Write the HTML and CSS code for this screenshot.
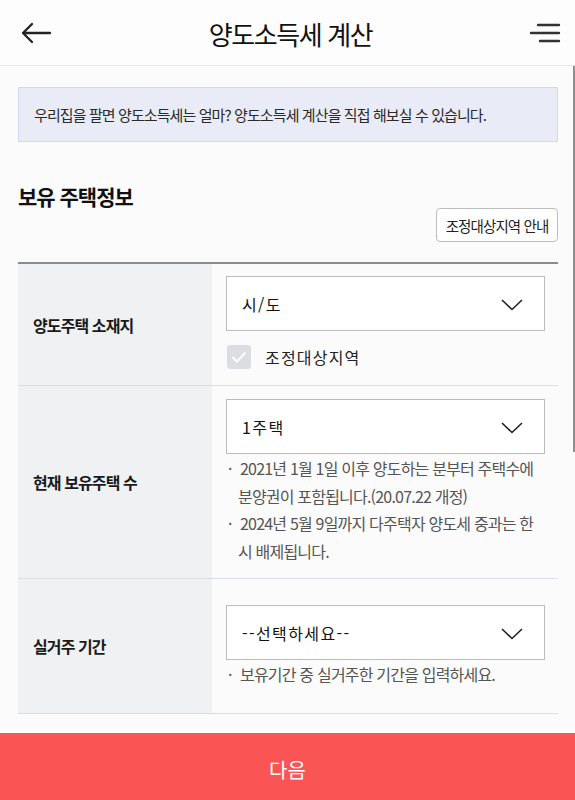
FILE: index.html
```html
<!DOCTYPE html>
<html lang="ko">
<head>
<meta charset="utf-8">
<title>양도소득세 계산</title>
<link rel="stylesheet" href="styles.css">
</head>
<body>
<header class="topbar">
  <button class="icon-btn" aria-label="뒤로">
    <svg width="32" height="24" viewBox="0 0 32 24"><path d="M30 12 H3 M12 3 L3 12 L12 21" fill="none" stroke="#222" stroke-width="2.3" stroke-linecap="round" stroke-linejoin="round"/></svg>
  </button>
  <h1 class="topbar-title">양도소득세 계산</h1>
  <button class="icon-btn" aria-label="메뉴">
    <svg width="32" height="22" viewBox="0 0 32 22"><path d="M9 3 H30 M2 11 H30 M11 19 H30" fill="none" stroke="#333" stroke-width="2.4" stroke-linecap="round"/></svg>
  </button>
</header>

<main class="content">
  <div class="intro">우리집을 팔면 양도소득세는 얼마? 양도소득세 계산을 직접 해보실 수 있습니다.</div>

  <h2 class="section-title">보유 주택정보</h2>
  <div class="section-actions">
    <button class="outline-btn">조정대상지역 안내</button>
  </div>

  <div class="form-table">
    <div class="row">
      <div class="label">양도주택 소재지</div>
      <div class="field field--first">
        <div class="select"><span>시/도</span><svg class="chev" width="22" height="12" viewBox="0 0 22 12"><path d="M1 1 L11 10.5 L21 1" fill="none" stroke="#222" stroke-width="1.6"/></svg></div>
        <label class="check">
          <span class="check-box"><svg width="16" height="12" viewBox="0 0 16 12"><path d="M1.5 6 L6 10.5 L14.5 1.5" fill="none" stroke="#fff" stroke-width="2"/></svg></span>
          <span>조정대상지역</span>
        </label>
      </div>
    </div>
    <div class="row">
      <div class="label">현재 보유주택 수</div>
      <div class="field field--second">
        <div class="select"><span>1주택</span><svg class="chev" width="22" height="12" viewBox="0 0 22 12"><path d="M1 1 L11 10.5 L21 1" fill="none" stroke="#222" stroke-width="1.6"/></svg></div>
        <ul class="notes">
          <li>2021년 1월 1일 이후 양도하는 분부터 주택수에 분양권이 포함됩니다.(20.07.22 개정)</li>
          <li>2024년 5월 9일까지 다주택자 양도세 중과는 한시 배제됩니다.</li>
        </ul>
      </div>
    </div>
    <div class="row">
      <div class="label">실거주 기간</div>
      <div class="field field--third">
        <div class="select"><span>--선택하세요--</span><svg class="chev" width="22" height="12" viewBox="0 0 22 12"><path d="M1 1 L11 10.5 L21 1" fill="none" stroke="#222" stroke-width="1.6"/></svg></div>
        <ul class="notes">
          <li>보유기간 중 실거주한 기간을 입력하세요.</li>
        </ul>
      </div>
    </div>
  </div>
</main>

<button class="next-btn">다음</button>
<div class="scroll-thumb"></div>
</body>
</html>
```

FILE: styles.css
```css
* { box-sizing: border-box; }

html, body {
  margin: 0;
  padding: 0;
}

body {
  width: 575px;
  background: #fbfbfb;
  font-family: "Noto Sans CJK KR", "Noto Sans", sans-serif;
  color: #222;
  position: relative;
}

.topbar {
  height: 66px;
  background: #fdfdfd;
  border-bottom: 1px solid #e6e6e6;
  display: flex;
  align-items: center;
  justify-content: space-between;
  padding: 0 14px 0 20px;
}

.icon-btn {
  border: 0;
  background: none;
  padding: 0;
  margin: 0;
  display: flex;
  align-items: center;
  height: 30px;
}

.topbar-title {
  margin: 0;
  font-size: 26px;
  font-weight: 400;
  letter-spacing: -1.4px;
  color: #111;
  line-height: 30px;
  padding-top: 2px;
}

.content {
  padding: 0 17px 0 18px;
}

.intro {
  margin-top: 21px;
  height: 55px;
  background: #e9ecf6;
  border: 1px solid #d3d8ef;
  padding: 0 0 0 15px;
  display: flex;
  align-items: center;
  font-size: 15px;
  letter-spacing: -0.9px;
  color: #2a2a2a;
}

.section-title {
  margin: 42px 0 0;
  font-size: 21px;
  line-height: 24px;
  font-weight: 700;
  letter-spacing: -1px;
  color: #111;
}

.section-actions {
  display: flex;
  justify-content: flex-end;
}

.outline-btn {
  height: 34px;
  width: 122px;
  padding: 0;
  background: #fff;
  border: 1px solid #bdbdbd;
  border-radius: 4px;
  font-family: inherit;
  font-size: 14.5px;
  letter-spacing: -0.9px;
  color: #222;
}

.form-table {
  margin-top: 20px;
  border-top: 2px solid #8c8c8c;
  margin-bottom: 19px;
}

.row {
  display: grid;
  grid-template-columns: 194px 1fr;
  border-bottom: 1px solid #dcdde2;
}

.label {
  background: #f0f1f3;
  display: flex;
  align-items: center;
  padding-left: 15px;
  font-size: 16px;
  font-weight: 600;
  letter-spacing: -0.9px;
  color: #1a1a1a;
}

.field {
  padding: 12px 13px 16px 14px;
}

.field--second {
  padding-top: 13px;
  padding-bottom: 13px;
}

.field--third {
  padding-top: 26px;
  padding-bottom: 24px;
}

.select {
  height: 55px;
  border: 1px solid #bcbcbc;
  background: #fff;
  display: flex;
  align-items: center;
  justify-content: space-between;
  padding: 0 21px 0 15px;
  font-size: 16px;
  letter-spacing: 1.4px;
  color: #111;
}

.chev { display: block; margin-top: 2px; }

.check {
  display: flex;
  align-items: center;
  margin-top: 14px;
  gap: 14px;
  font-size: 16px;
  color: #222;
  letter-spacing: 1.2px;
}

.check-box {
  width: 24px;
  height: 24px;
  margin-left: 1px;
  border-radius: 3px;
  background: #dcdde3;
  display: flex;
  align-items: center;
  justify-content: center;
}

.notes {
  list-style: none;
  margin: 1px 0 0;
  padding: 0;
  font-size: 16px;
  line-height: 27.5px;
  letter-spacing: -0.8px;
  color: #555;
}

.notes li {
  padding-left: 12px;
  text-indent: -12px;
}

.notes li::before {
  content: "·";
  display: inline-block;
  width: 12px;
  text-indent: 0;
  padding-left: 2px;
  letter-spacing: 0;
}

.next-btn {
  display: block;
  width: 100%;
  height: 67px;
  border: 0;
  margin: 0;
  background: #fa5455;
  color: #fff;
  font-family: inherit;
  font-size: 20px;
  padding-top: 8px;
}

.scroll-thumb {
  position: absolute;
  top: 66px;
  right: 0;
  width: 2px;
  height: 386px;
  background: #8f8f8f;
}
```
